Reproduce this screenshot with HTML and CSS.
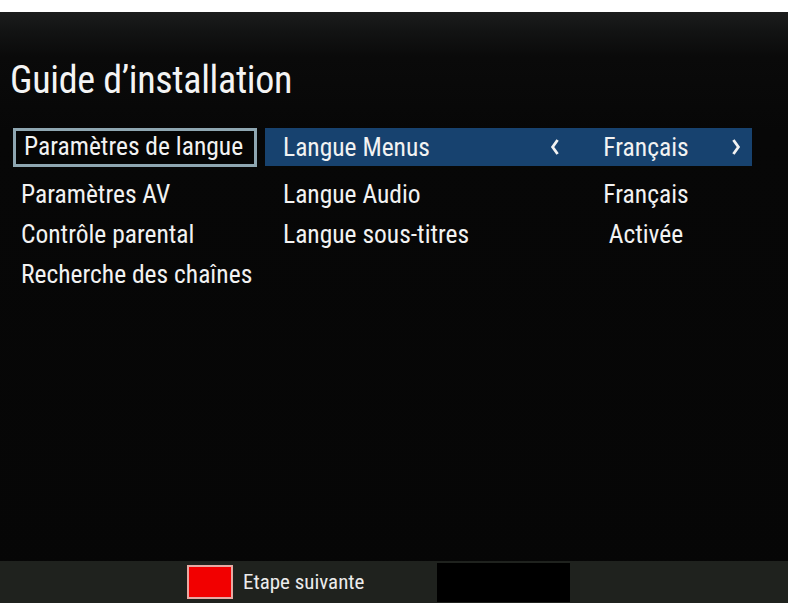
FILE: index.html
```html
<!DOCTYPE html>
<html lang="fr">
<head>
<meta charset="utf-8">
<title>Guide d'installation</title>
<link rel="stylesheet" href="styles.css">
</head>
<body>
<div class="screen">
  <header class="header">
    <h1 class="title">Guide d’installation</h1>
  </header>
  <main class="content">
    <ul class="menu">
      <li class="menu-item selected">Paramètres de langue</li>
      <li class="menu-item">Paramètres AV</li>
      <li class="menu-item">Contrôle parental</li>
      <li class="menu-item">Recherche des chaînes</li>
    </ul>
    <div class="settings">
      <div class="setting active">
        <span class="label">Langue Menus</span>
        <span class="arrow"><svg viewBox="0 0 10 18" width="10" height="18"><path d="M7.6 2 L2.6 9 L7.6 16" fill="none" stroke="#f2f2f2" stroke-width="2.8" stroke-linejoin="miter"/></svg></span>
        <span class="value">Français</span>
        <span class="arrow"><svg viewBox="0 0 10 18" width="10" height="18"><path d="M2.4 2 L7.4 9 L2.4 16" fill="none" stroke="#f2f2f2" stroke-width="2.8" stroke-linejoin="miter"/></svg></span>
      </div>
      <div class="setting">
        <span class="label">Langue Audio</span>
        <span class="arrow"></span>
        <span class="value">Français</span>
        <span class="arrow"></span>
      </div>
      <div class="setting">
        <span class="label">Langue sous-titres</span>
        <span class="arrow"></span>
        <span class="value">Activée</span>
        <span class="arrow"></span>
      </div>
    </div>
  </main>
  <footer class="footer">
    <div class="legend">
      <span class="key-red"></span>
      <span class="legend-text">Etape suivante</span>
    </div>
    <div class="blank-box"></div>
  </footer>
</div>
</body>
</html>
```

FILE: styles.css
```css
html, body {
  margin: 0;
  padding: 0;
  background: #ffffff;
}

body {
  font-family: "Liberation Sans Narrow", "Roboto Condensed", "DejaVu Sans Condensed", sans-serif;
  color: #f2f2f2;
}

.screen {
  margin-top: 12px;
  width: 788px;
  height: 591px;
  display: flex;
  flex-direction: column;
  background: linear-gradient(to bottom, #1b1c1c 0px, #121313 20px, #0a0a0a 45px, #070707 120px, #060606 100%);
}

.header {
  height: 116px;
  box-sizing: border-box;
  padding-top: 48px;
  padding-left: 10px;
}

.title {
  margin: 0;
  font-size: 38px;
  font-weight: normal;
  line-height: 40px;
  letter-spacing: -0.3px;
  color: #f4f4f4;
}

.content {
  flex: 1;
  display: flex;
  gap: 8px;
  padding-left: 13px;
}

.menu {
  list-style: none;
  margin: 0;
  padding: 0;
  width: 244px;
}

.menu-item {
  height: 40px;
  line-height: 40px;
  box-sizing: border-box;
  padding-left: 8px;
  font-size: 25.5px;
  white-space: nowrap;
}

.menu-item.selected {
  height: 39px;
  line-height: 31px;
  border: 3px solid #8ea6b1;
  padding-left: 8px;
  margin-bottom: 7px;
  background: #050505;
}

.settings {
  width: 487px;
}

.setting {
  display: grid;
  grid-template-columns: 1fr 26px 156px 24px;
  align-items: center;
  height: 40px;
  line-height: 40px;
  padding-left: 18px;
  padding-right: 4px;
  font-size: 25.5px;
  white-space: nowrap;
}

.setting.active {
  height: 38px;
  line-height: 34px;
  margin-bottom: 8px;
  background: #17426f;
}

.arrow {
  display: flex;
  justify-content: center;
  align-items: center;
}

.arrow svg {
  display: block;
}

.value {
  text-align: center;
}

.footer {
  height: 42px;
  display: flex;
  align-items: center;
  padding-left: 187px;
  background: #1f221e;
}

.legend {
  width: 250px;
  display: flex;
  align-items: center;
  gap: 10px;
}

.key-red {
  width: 46px;
  height: 34px;
  box-sizing: border-box;
  border: 2px solid #e6a9a3;
  background: #f20000;
}

.legend-text {
  font-size: 21px;
  color: #ececec;
}

.blank-box {
  width: 133px;
  height: 39px;
  background: #000000;
}
```
